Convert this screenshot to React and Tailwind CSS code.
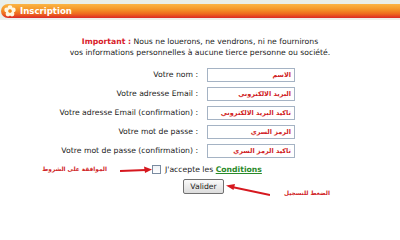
import React from 'react'

const CHAMPS = [
  { label: 'Votre nom :', valeur: 'الاسم' },
  { label: 'Votre adresse Email :', valeur: 'البريد الالكتروني' },
  { label: 'Votre adresse Email (confirmation) :', valeur: 'تاكيد البريد الالكتروني' },
  { label: 'Votre mot de passe :', valeur: 'الرمز السري' },
  { label: 'Votre mot de passe (confirmation) :', valeur: 'تاكيد الرمز السري' },
]

function Fleur() {
  return (
    <svg width="12" height="12" viewBox="0 0 12 12" className="shrink-0">
      <g fill="#fff7e0">
        <circle cx="6" cy="2.6" r="2.4" />
        <circle cx="9.3" cy="5" r="2.4" />
        <circle cx="8" cy="9" r="2.4" />
        <circle cx="4" cy="9" r="2.4" />
        <circle cx="2.7" cy="5" r="2.4" />
      </g>
      <circle cx="6" cy="6.1" r="1.8" fill="#f08a1c" />
    </svg>
  )
}

export default function App() {
  return (
    <div className="w-[400px] h-[213px] bg-white overflow-hidden text-[#222] font-['DejaVu_Sans',Verdana,sans-serif]">
      {/* Bandeau */}
      <div className="bg-[#e9efe9] pt-[4px] pl-[1px]">
        <div className="h-[14px] rounded-l-[7px] flex items-center gap-[4px] pl-[3px] bg-[linear-gradient(to_bottom,#fbb545_0%,#f59a2a_35%,#ef6a1f_70%,#dc2a26_100%)]">
          <Fleur />
          <span className="text-white font-bold text-[8.6px] leading-none">Inscription</span>
        </div>
      </div>
      <div className="h-[2px] bg-[#eef0ee]" />

      {/* Avertissement */}
      <div className="mt-[16px] text-center text-[7.7px] leading-[11px]">
        <p>
          <span className="text-[#d8202a] font-bold">Important :</span> Nous ne louerons, ne vendrons, ni ne fournirons
        </p>
        <p>vos informations personnelles à aucune tierce personne ou société.</p>
      </div>

      {/* Formulaire */}
      <div className="mt-[10px] flex flex-col gap-[5px]">
        {CHAMPS.map((c) => (
          <div key={c.label} className="flex items-center">
            <span className="w-[200px] text-right text-[7.7px] leading-none pr-[2px] whitespace-nowrap">{c.label}</span>
            <div className="ml-[7px] w-[88px] h-[14px] border border-[#a5b3c4] bg-white flex items-center justify-end px-[3px]">
              <span dir="rtl" className="text-[#d01c24] font-bold text-[6.5px] leading-none whitespace-nowrap">
                {c.valeur}
              </span>
            </div>
          </div>
        ))}
      </div>

      {/* Conditions */}
      <div className="mt-[7px] flex items-center pl-[45px]">
        <span dir="rtl" className="w-[62px] whitespace-nowrap text-[#d01c24] text-[5.8px] font-bold leading-none text-center">
          الموافقة على الشروط
        </span>
        <svg width="32" height="8" viewBox="0 0 32 8" className="ml-[13px]">
          <line x1="0" y1="5" x2="26" y2="4" stroke="#d6181f" strokeWidth="2" />
          <polygon points="32,3.5 24,0.5 25,7" fill="#d6181f" />
        </svg>
        <span className="w-[9px] h-[9px] border border-[#7a8ba0] bg-[linear-gradient(to_bottom,#eef1f5,#fff)]" />
        <span className="ml-[4px] text-[7.7px] leading-none">
          J'accepte les{' '}
          <a className="text-[#2a8a2a] font-bold underline">Conditions</a>
        </span>
      </div>

      {/* Valider */}
      <div className="mt-[5px] flex items-start pl-[183px]">
        <button className="w-[41px] h-[15px] border border-[#707070] rounded-[2px] bg-[linear-gradient(to_bottom,#fafafa,#dcdcdc)] text-[7.7px] leading-none text-[#222]">
          Valider
        </button>
        <svg width="44" height="14" viewBox="0 0 44 14" className="ml-[2px] mt-[5px]">
          <line x1="6" y1="3" x2="44" y2="11" stroke="#d6181f" strokeWidth="2" />
          <polygon points="0,1.5 9,0 7.5,6" fill="#d6181f" />
        </svg>
        <span dir="rtl" className="ml-[14px] mt-[12px] whitespace-nowrap text-[#d01c24] text-[5.8px] font-bold leading-none">
          الضغط للتسجيل
        </span>
      </div>
    </div>
  )
}
